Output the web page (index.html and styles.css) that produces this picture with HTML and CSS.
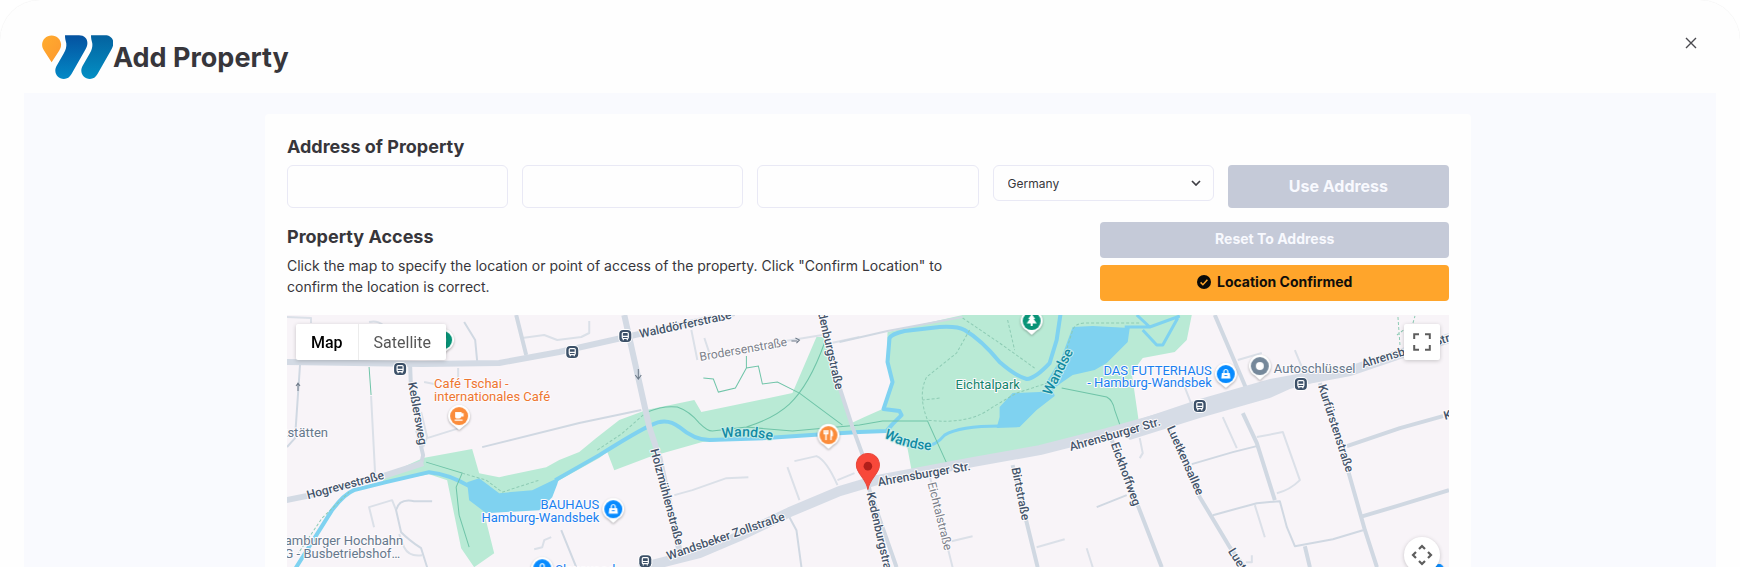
FILE: index.html
```html
<!DOCTYPE html>
<html lang="en">
<head>
<meta charset="utf-8">
<meta name="viewport" content="width=device-width, initial-scale=1">
<title>Add Property</title>
<link rel="stylesheet" href="styles.css">
</head>
<body>
<div class="frame">
  <main class="modal">
    <header class="modal-header">
      <svg class="logo" viewBox="42 35 71 44" aria-hidden="true">
        <defs>
          <linearGradient id="blue-a" x1="0" y1="0" x2="0" y2="1"><stop offset="0" stop-color="#0452a0"/><stop offset="1" stop-color="#0389c6"/></linearGradient>
          <linearGradient id="blue-b" x1="0" y1="0" x2="0" y2="1"><stop offset="0" stop-color="#04629f"/><stop offset="1" stop-color="#038fc4"/></linearGradient>
          <linearGradient id="pin-fill" x1="0" y1="0" x2="1" y2="1"><stop offset="0" stop-color="#ffac2e"/><stop offset="1" stop-color="#fd9830"/></linearGradient>
        </defs>
        <path fill="url(#pin-fill)" d="M51.6 35.500c5.300 0 9.500 4.100 9.500 9.300 0 2-.7 3.900-1.800 5.700L51.600 62.300 44 50.500c-1.200-1.800-1.900-3.700-1.900-5.700 0-5.200 4.200-9.300 9.500-9.300z"/>
        <path fill="url(#blue-a)" d="M65 35.300h14c5.200 0 8.400 3.300 8.400 7.600 0 2.600-1 5-2.400 7.400L71.500 74c-1.700 3.200-4.300 4.900-7.600 4.900-4.900 0-8.600-3.700-8.600-8.300 0-2.300.8-3.900 1.800-5.700l6.600-11.400C66 49.500 66.600 46.500 66.300 43.500c-.2-2.200-1.300-3.300-1.300-8.200z"/>
        <path fill="url(#blue-b)" d="M91 35.300h14c5.200 0 8.400 3.300 8.400 7.600 0 2.600-1 5-2.400 7.400L97.500 74c-1.700 3.200-4.300 4.900-7.600 4.900-4.900 0-8.600-3.700-8.600-8.300 0-2.300.8-3.900 1.800-5.700l6.600-11.400C92 49.500 92.600 46.500 92.300 43.500c-.2-2.200-1.300-3.300-1.300-8.200z"/>
      </svg>
      <h1 class="title">Add Property</h1>
      <button class="close" type="button" aria-label="Close">
        <svg viewBox="0 0 12 12" width="12" height="12" aria-hidden="true"><path d="M1 1l10 10M11 1L1 11" fill="none" stroke="#4a4a4f" stroke-width="1.400"/></svg>
      </button>
    </header>

    <div class="modal-body">
      <section class="card">
        <h2 class="heading">Address of Property</h2>
        <form class="address">
          <input class="field" type="text" aria-label="Street">
          <input class="field" type="text" aria-label="Postal code">
          <input class="field" type="text" aria-label="City">
          <div class="select-wrap">
            <select class="select" aria-label="Country"><option>Germany</option></select>
            <svg class="chevron" viewBox="0 0 10 6" aria-hidden="true"><path d="M1 1l4 4 4-4" fill="none" stroke="#3f3f45" stroke-width="1.700"/></svg>
          </div>
          <button class="btn btn-large btn-muted" type="button">Use Address</button>
        </form>

        <div class="access">
          <div class="access-text">
            <h2 class="heading">Property Access</h2>
            <p class="hint">Click the map to specify the location or point of access of the property. Click "Confirm Location" to confirm the location is correct.</p>
          </div>
          <div class="access-actions">
            <button class="btn btn-muted" type="button">Reset To Address</button>
            <button class="btn btn-primary" type="button">
              <svg class="check" viewBox="0 0 14 14" aria-hidden="true"><circle cx="7" cy="7" r="7" fill="#0a0a08"/><path d="M3.600 7.400l2.300 2.300 4.500-5" fill="none" stroke="#ffa52b" stroke-width="1.500"/></svg>
              Location Confirmed
            </button>
          </div>
        </div>

        <div class="map">
          <svg class="map-canvas" viewBox="288 315 1161 252" preserveAspectRatio="xMidYMin slice" role="img" aria-label="Map of Hamburg-Wandsbek">
            <defs>
              <path id="river-label-a" d="M723 438 Q746 434 772 440"/>
              <path id="river-label-b" d="M884 437 Q905 449 932 450"/>
              <g id="bus-stop">
                <rect x="-7" y="-7" width="14" height="14" rx="5" fill="#fff"/>
                <rect x="-6" y="-6" width="12" height="12" rx="4" fill="#3c5068"/>
                <rect x="-3" y="-3.500" width="6" height="6" rx="1" fill="none" stroke="#fff" stroke-width="1.200"/>
                <path d="M-3 .3H3M-2 3v1.300M2 3v1.300" stroke="#fff" stroke-width="1.200"/>
              </g>
              <path id="poi" d="M0 14L-5 9.600A11 11 0 1 1 5 9.600Z"/>
              <g id="bag"><path d="M-4-1h8l.6 5.500h-9.200z" fill="#fff"/><path d="M-2-1v-1.500a2 2 0 0 1 4 0V-1" fill="none" stroke="#fff" stroke-width="1.200"/><path d="M-1.500 1.500h3" stroke="#1a8cff"/></g>
            </defs>

            <rect x="288" y="315" width="1161" height="252" fill="#f8f4f8"/>

            <g class="park">
              <path d="M424 458L473 449 480 473 500 477 547 467 560 460 580 452 597 438 620 420 647 410 695 400 702 412 793 393 817 337 825 337 845 400 853 432 767 438 703 442 650 457 615 470 608 452 600 458 560 480 540 500 485 513 495 553 475 567 462 548 448 480 430 474 384 482 384 476z"/>
              <path d="M888 332L963 315H1192L1187 340 1175 352 1143 358 1132 373 1140 428 1100 440 912 470 907 443 892 430 853 432 850 424 865 417 883 409 893 382 887 362z"/>
            </g>

            <g class="water">
              <path d="M468 482L480 478 500 493 533 490 560 477 558 484 553 497 540 510 487 513 470 500z"/>
              <path d="M1000 407L1013 393 1040 392 1053 388 1055 396 1037 410 1020 427 997 428 1000 417z"/>
              <path d="M1073 327L1093 326 1130 328 1128 342 1107 363 1095 370 1073 375 1060 384 1050 392 1048 380 1062 357z"/>
            </g>
            <g class="river">
              <path d="M296 569L333 510Q345 494 355 490L387 482 430 472Q450 474 470 486M556 480L600 455Q640 430 652 425 667 417 680 427 695 440 710 440L767 438 827 434 860 432 887 431 893 424 902 415 900 411 884 409 893 382 888 362 890 338Q892 334 905 331L940 327Q958 326 965 330 982 340 1000 362 1016 376 1027 379 1036 378 1050 363L1057 340 1061 313"/>
              <path d="M887 431Q925 460 945 435 960 426 1000 426M1125 327L1150 327 1180 316M1137 315L1150 327M1143 330L1157 345H1163L1178 318" stroke-width="3"/>
            </g>

            <g class="trail">
              <path d="M704 378L714 379 719 392 736 388 747 368 759 366 763 384 778 382 800 393 843 425M747 368V356M648 412Q665 405 678 407 690 411 700 423 708 431 713 431L747 427Q775 418 790 404 810 385 825 343M747 427L793 431 860 425 883 421 928 421 948 465M1062 388L1107 397Q1113 400 1115 410L1121 427M427 462L463 473 457 487 460 515 470 547M370 367L372 395"/>
              <path class="dashed" d="M463 473L487 480 503 492 540 480M598 450L622 434 645 414M970 330L957 353 927 377Q918 395 928 420 970 425 993 407L1017 393 1057 380M940 398L923 400M963 318L1000 343 1035 368M1008 320L1015 350M1060 372L1073 330Q1076 323 1085 323L1140 323M298 555L323 518 350 492M1398 317L1400 345M1397 335L1413 323 1415 316"/>
            </g>

            <g class="road road-thin">
              <path d="M287 317L312 318V323M372 396L376 473M422 412L428 437 424 447M428 438L460 428M459 368V385L448 388M425 382L435 384M523 338L545 335 558 340 582 337 590 333V321M370 322Q378 320 384 325M692 330L698 360M705 338L710 353M780 342L823 335M832 343L860 337M375 527L370 507 393 500 397 510M400 534L405 547Q410 557 423 555M535 549L543 547 545 540 552 537M675 495L693 490 727 478 749 477M788 467L800 500M795 461L817 456Q827 460 838 485M838 480L855 473M930 475L953 567M952 541L973 536M1037 547L1065 539M1087 548L1093 567M1238 360L1262 353M1295 350L1302 367M1185 387L1192 405M1140 438L1143 453 1140 458M1223 417L1237 448M1257 437L1283 432 1300 480Q1290 490 1277 493M1255 505L1265 537M1252 555V562H1246"/>
            </g>
            <g class="road">
              <path d="M301 365L296 438 288 447M465 322L476 340 478 361M483 447L580 423 642 410M840 342L888 331 963 317M433 501H415Q400 498 397 510L402 532Q410 540 422 548L428 567M562 530L577 567M790 517L797 530 802 567M1097 507L1127 495M1192 464L1233 452 1257 446M1213 515L1257 503 1280 501 1287 527 1295 546 1333 539 1363 530"/>
            </g>
            <g class="road road-wide">
              <path d="M411 365L412 392M418 430L424 455 422 464M517 315L527 355M823 315L840 387 853 427 865 460 870 490 897 567M1013 465L1038 567M1112 440L1138 505 1162 567M1215 315L1247 390M1243 413L1257 443 1275 500M1168 427L1200 497 1230 547 1245 567M1305 546L1310 567M1320 383L1348 470 1365 530 1377 567M1347 446L1400 428 1443 416M1363 516L1400 505 1449 490"/>
            </g>
            <g class="road road-main">
              <path d="M287 500L307 496 384 476 424 463M287 362L423 364 500 363 560 352 640 334 735 313M625 315L650 427 660 457 680 550"/>
            </g>
            <path class="road road-trunk" d="M640 568L700 553 740 536 790 512 840 491 877 480 973 462 1040 450 1107 433 1200 407 1270 386 1350 371 1400 354 1450 338"/>
            <path fill="#d6dce6" d="M1120 426L1200 399 1270 379 1330 368V378L1290 389 1270 398 1200 418 1130 440z"/>

            <g class="street">
              <text transform="translate(409 383) rotate(80)">Keßlersweg</text>
              <text transform="translate(309 499) rotate(-15)">Hogrevestraße</text>
              <text transform="translate(641 338) rotate(-12)">Walddörferstraße</text>
              <text transform="translate(651 450) rotate(75)">Holzmühlenstraße</text>
              <text transform="translate(817 307) rotate(77)">edenburgstraße</text>
              <text transform="translate(669 560) rotate(-19)">Wandsbeker Zollstraße</text>
              <text transform="translate(879 486) rotate(-10)">Ahrensburger Str.</text>
              <text transform="translate(1071 451) rotate(-16)">Ahrensburger Str.</text>
              <text transform="translate(1363 368) rotate(-17)">Ahrensburger Str.</text>
              <text transform="translate(867 493) rotate(77)">Kedenburgstraße</text>
              <text transform="translate(1012 468) rotate(79)">Birtstraße</text>
              <text transform="translate(1111 444) rotate(70)">Eickhoffweg</text>
              <text transform="translate(1167 428) rotate(66)">Luetkensallee</text>
              <text transform="translate(1228 551) rotate(58)">Luetkensallee</text>
              <text transform="translate(1318 386) rotate(72)">Kurfürstenstraße</text>
              <text transform="translate(1445 420) rotate(-16)">K</text>
            </g>
            <g class="street street-minor">
              <text transform="translate(701 361) rotate(-10)">Brodersenstraße</text>
              <text transform="translate(928 483) rotate(76)">Eichtalstraße</text>
            </g>
            <g class="arrow">
              <path d="M639 369V378M636 375l3 4 3-4M792 341h6M796 338l4 2-3 3M299 391v-8M297 386l2-3 2 3"/>
            </g>

            <g class="river-name">
              <text><textPath href="#river-label-a">Wandse</textPath></text>
              <text><textPath href="#river-label-b">Wandse</textPath></text>
              <text transform="translate(1051 396) rotate(-63)">Wandse</text>
            </g>
            <text class="place place-park" x="956" y="389">Eichtalpark</text>

            <g class="place place-food">
              <text x="435" y="388">Café Tschai -</text>
              <text x="435" y="401">internationales Café</text>
            </g>
            <g class="place place-shop">
              <text x="600" y="509" text-anchor="end">BAUHAUS</text>
              <text x="600" y="522" text-anchor="end">Hamburg-Wandsbek</text>
              <text x="1212" y="375" text-anchor="end">DAS FUTTERHAUS</text>
              <text x="1212" y="387" text-anchor="end">- Hamburg-Wandsbek</text>
              <text x="556" y="574">Slowwood</text>
            </g>
            <g class="place place-other">
              <text x="1274" y="373">Autoschlüssel</text>
              <text x="329" y="437" text-anchor="end">Werkstätten</text>
              <text x="404" y="545" text-anchor="end">Hamburger Hochbahn</text>
              <text x="401" y="558" text-anchor="end">AG - Busbetriebshof…</text>
            </g>

            <g>
              <use href="#bus-stop" x="401" y="369"/><use href="#bus-stop" x="573" y="352"/><use href="#bus-stop" x="626" y="336"/>
              <use href="#bus-stop" x="646" y="561"/><use href="#bus-stop" x="1200" y="406"/><use href="#bus-stop" x="1301" y="384"/>
            </g>

            <g class="poi">
              <g transform="translate(460 416)"><use href="#poi"/><circle r="9" fill="#fb8c3a"/><path d="M-4-4h6.500v1.200h2v3.300h-2.300c-.3 1.300-1.200 2-2.200 2h-2c-1.200 0-2-.9-2-2.200zM-4.500 3.500h8v1.200h-8z" fill="#fff"/></g>
              <g transform="translate(829 435)"><use href="#poi"/><circle r="9" fill="#fb8c3a"/><path d="M-2.500-5v10M-4.300-5v3.500h3.600V-5M2.500 5v-9.500c1.400 1 1.400 3.500 1.200 5H2.500" fill="none" stroke="#fff" stroke-width="1.400"/></g>
              <g transform="translate(614 509)"><use href="#poi"/><circle r="9" fill="#078bff"/><use href="#bag"/></g>
              <g transform="translate(1226 374)"><use href="#poi"/><circle r="9" fill="#078bff"/><use href="#bag"/></g>
              <g transform="translate(543 568)"><use href="#poi"/><circle r="9" fill="#078bff"/><use href="#bag"/></g>
              <g transform="translate(1260 366)"><use href="#poi"/><circle r="9" fill="#75889a"/><circle r="4" fill="#fff"/></g>
              <g transform="translate(1032 321)"><use href="#poi"/><circle r="9" fill="#089377"/><path d="M0-7l3.500 5H2l3 4.500H1V5h-2V2.500h-4L-2-2h-1.500z" fill="#fff"/></g>
              <g transform="translate(444 340)"><use href="#poi"/><circle r="9" fill="#089377"/><circle r="3" fill="#fff"/></g>
              <circle cx="1439" cy="569" r="5" fill="#078bff"/>
            </g>

            <path d="M868.400 487.500c-.8-5.500-3.300-9.300-6.300-13.300-3.200-4.200-5.200-7-5.200-11.200 0-6.500 5-11.500 11.500-11.500s11.500 5 11.500 11.500c0 4.200-2 7-5.200 11.200-3 4-5.500 7.800-6.300 13.300z" transform="translate(0 2)" fill="#f8483a" stroke="#e8473b"/>
            <circle cx="868.400" cy="466" r="4.300" fill="#b01f1a"/>
          </svg>

          <div class="map-type">
            <button class="map-type-btn is-active" type="button">Map</button>
            <button class="map-type-btn" type="button">Satellite</button>
          </div>
          <button class="map-control fullscreen" type="button" aria-label="Toggle fullscreen view">
            <svg viewBox="0 0 18 18" width="18" height="18" aria-hidden="true"><path d="M1.200 6V1.200H6M12 1.200h4.800V6M16.800 12v4.800H12M6 16.800H1.200V12" fill="none" stroke="#5d5d5d" stroke-width="2"/></svg>
          </button>
          <button class="map-control pan" type="button" aria-label="Map camera controls">
            <svg viewBox="0 0 22 22" width="22" height="22" aria-hidden="true"><path d="M8 5l3-3 3 3M8 17l3 3 3-3M5 8l-3 3 3 3M17 8l3 3-3 3" fill="none" stroke="#5d5d5d" stroke-width="2.200"/></svg>
          </button>
        </div>
      </section>
    </div>
  </main>
</div>
</body>
</html>
```
FILE: styles.css
```css
* {
  box-sizing: border-box;
}

body {
  margin: 0;
  background: #fff;
  color: #37363b;
  font-family: Inter, "Liberation Sans", sans-serif;
}

button,
input,
select {
  font-family: inherit;
  color: inherit;
}

h1,
h2,
p {
  margin: 0;
}

.frame {
  height: 100vh;
  overflow: hidden;
  padding: 0 24px;
  border-radius: 40px 40px 0 0;
  background: #fefefe;
  box-shadow: 0 0 1px rgba(0, 0, 0, 0.1);
}

.modal {
  display: flex;
  flex-direction: column;
  height: 100%;
}

.modal-header {
  display: flex;
  align-items: flex-start;
  padding: 35px 17px 14px 18px;
}

.logo {
  flex: none;
  width: 71px;
  height: 44px;
}

.title {
  flex: 1;
  font-size: 27px;
  line-height: 46px;
  height: 44px;
  font-weight: 700;
}

.close {
  display: flex;
  padding: 2px;
  border: 0;
  background: none;
}

.modal-body {
  flex: 1;
  display: flex;
  min-height: 0;
  padding: 21px 4px 0 0;
  background: #f9fafe;
}

.card {
  flex: 1;
  display: flex;
  flex-direction: column;
  max-width: 1206px;
  margin: 0 auto;
  padding: 21px 22px 0;
  border-radius: 4px 4px 0 0;
  background: #fefefe;
}

.heading {
  font-size: 18px;
  line-height: 24px;
  font-weight: 700;
}

.address {
  display: grid;
  grid-template-columns: repeat(5, minmax(0, 1fr));
  align-items: start;
  gap: 14px;
  margin-top: 6px;
}

.field,
.select {
  width: 100%;
  border: 1px solid #e9e9f5;
  border-radius: 6px;
  background: #fefefe;
}

.field {
  height: 43px;
  padding: 0 14px;
}

.select-wrap {
  position: relative;
}

.select {
  display: block;
  height: 36px;
  padding: 0 14px;
  font-size: 12px;
  appearance: none;
}

.chevron {
  position: absolute;
  top: 15px;
  right: 13px;
  width: 10px;
  height: 6px;
  pointer-events: none;
}

.btn {
  display: flex;
  align-items: center;
  justify-content: center;
  gap: 6px;
  height: 36px;
  border: 0;
  border-radius: 4px;
  font-size: 14px;
  line-height: 16px;
  padding: 0 6px 2px;
  font-weight: 700;
}

.btn-large {
  height: 43px;
  font-size: 16px;
}

.btn-muted {
  background: #c5cad8;
  color: #f8f9fe;
}

.btn-primary {
  background: #ffa52b;
  color: #0f0e0a;
}

.check {
  width: 14px;
  height: 14px;
}

.access {
  display: flex;
  justify-content: space-between;
  gap: 24px;
  margin-top: 14px;
}

.access-text {
  flex: 0 1 696px;
  padding-top: 3px;
}

.hint {
  margin-top: 6px;
  font-size: 14px;
  line-height: 21px;
}

.access-actions {
  flex: 0 0 30%;
  display: flex;
  flex-direction: column;
  gap: 7px;
}

.map {
  position: relative;
  flex: 1;
  min-height: 0;
  margin-top: 14px;
  overflow: hidden;
  font-family: Roboto, sans-serif;
}

.map-canvas {
  display: block;
  width: 100%;
  height: 100%;
}

.park {
  fill: #b9ead5;
}

.water {
  fill: #7fd2f0;
}

.river {
  fill: none;
  stroke: #7fd2f0;
  stroke-width: 4px;
  stroke-linejoin: round;
}

.trail {
  fill: none;
  stroke: #6fc4a8;
  stroke-width: 1px;
}

.dashed {
  stroke: #8dcbb4;
  stroke-dasharray: 3 2;
}

.road {
  fill: none;
  stroke: #d0d8e2;
  stroke-width: 2px;
  stroke-linejoin: round;
}

.road-thin {
  stroke: #dbe0e8;
}

.road-wide {
  stroke-width: 4px;
}

.road-main {
  stroke: #d3dae4;
  stroke-width: 6px;
}

.road-trunk {
  stroke: #d6dce6;
  stroke-width: 10px;
}

.street,
.river-name,
.place {
  paint-order: stroke;
  stroke: #fdfbfd;
  stroke-width: 2px;
  stroke-linejoin: round;
  font-size: 12px;
}

.street {
  fill: #44546a;
  font-weight: 500;
}

.street-minor {
  fill: #7b7f8a;
  font-weight: 400;
}

.river-name {
  fill: #128aa3;
  stroke: #c4ede8;
  font-size: 14px;
  font-weight: 500;
}

.place {
  font-size: 13px;
}

.place-park {
  fill: #12836b;
}

.place-food {
  fill: #ee7630;
}

.place-shop {
  fill: #1a7ff0;
}

.place-other {
  fill: #66788c;
}

.arrow {
  fill: none;
  stroke: #6c7887;
}

.poi {
  fill: #fff;
  filter: drop-shadow(0 1px 1px rgba(0, 0, 0, 0.3));
}

.map-type {
  position: absolute;
  top: 9px;
  left: 9px;
  display: flex;
  border-radius: 2px;
  background: #fff;
  box-shadow: 0 1px 4px rgba(0, 0, 0, 0.2);
}

.map-type-btn {
  height: 36px;
  padding: 0 15px;
  border: 0;
  background: none;
  color: #565656;
  font-size: 16px;
}

.map-type-btn + .map-type-btn {
  border-left: 1px solid #ececec;
}

.map-type .is-active {
  color: #000;
  font-weight: 500;
}

.map-control {
  position: absolute;
  right: 9px;
  display: flex;
  align-items: center;
  justify-content: center;
  width: 36px;
  height: 36px;
  padding: 0;
  border: 0;
  background: #fff;
  box-shadow: 0 1px 4px rgba(0, 0, 0, 0.2);
}

.fullscreen {
  top: 9px;
  border-radius: 2px;
}

.pan {
  top: 222px;
  border-radius: 50%;
}
```
